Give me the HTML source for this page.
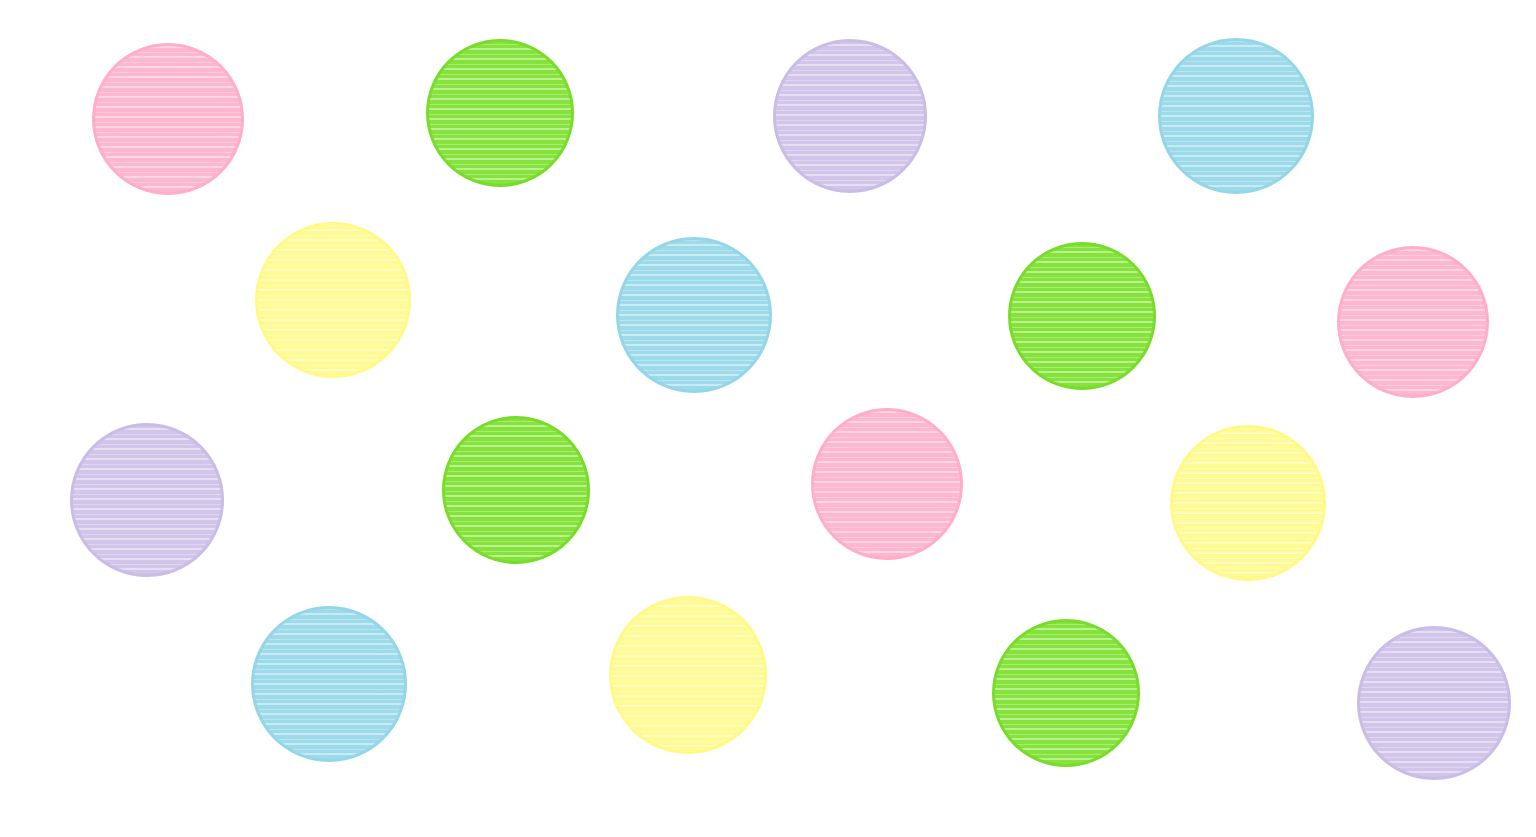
<!DOCTYPE html>
<html><head><meta charset="utf-8"><style>
html,body{margin:0;padding:0;background:#fff;width:1536px;height:837px;overflow:hidden;position:relative}
.c{position:absolute;border-radius:50%;box-sizing:border-box;border:3px solid var(--b);
background:
repeating-linear-gradient(0deg, rgba(255,255,255,0) 0 4px, rgba(255,255,255,.45) 4px 6px, rgba(255,255,255,0) 6px 9px, rgba(255,255,255,.3) 9px 10px),
var(--f)}
.p{--f:#ffb6cf;--b:#ffadc9}
.g{--f:#86e33c;--b:#78dc2a}
.u{--f:#d1c5ea;--b:#c9bce6}
.b{--f:#9ddaea;--b:#93d6e8}
.y{--f:#fffb94;--b:#fff985}
</style></head><body>
<div class="c p" style="left:92px;top:43px;width:152px;height:152px"></div>
<div class="c g" style="left:426px;top:39px;width:148px;height:148px"></div>
<div class="c u" style="left:773px;top:39px;width:154px;height:154px"></div>
<div class="c b" style="left:1158px;top:38px;width:156px;height:156px"></div>
<div class="c y" style="left:255px;top:222px;width:156px;height:156px"></div>
<div class="c b" style="left:616px;top:237px;width:156px;height:156px"></div>
<div class="c g" style="left:1008px;top:242px;width:148px;height:148px"></div>
<div class="c p" style="left:1337px;top:246px;width:152px;height:152px"></div>
<div class="c u" style="left:70px;top:423px;width:154px;height:154px"></div>
<div class="c g" style="left:442px;top:416px;width:148px;height:148px"></div>
<div class="c p" style="left:811px;top:408px;width:152px;height:152px"></div>
<div class="c y" style="left:1170px;top:425px;width:156px;height:156px"></div>
<div class="c b" style="left:251px;top:606px;width:156px;height:156px"></div>
<div class="c y" style="left:609px;top:596px;width:158px;height:158px"></div>
<div class="c g" style="left:992px;top:619px;width:148px;height:148px"></div>
<div class="c u" style="left:1357px;top:626px;width:154px;height:154px"></div>
</body></html>
